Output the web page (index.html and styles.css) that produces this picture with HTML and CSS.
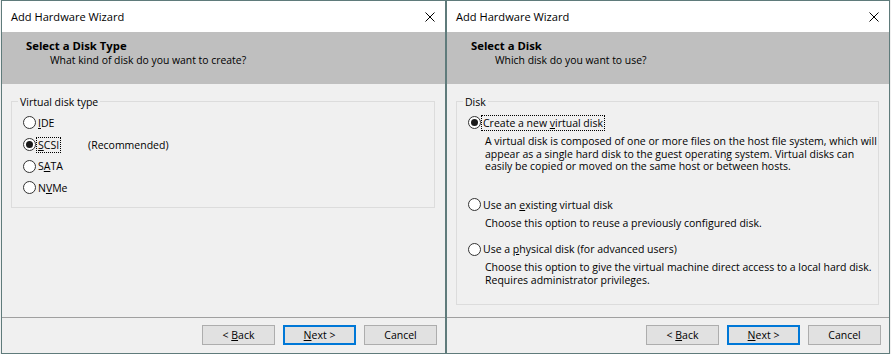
FILE: index.html
```html
<!DOCTYPE html>
<html lang="en">
<head>
  <meta charset="UTF-8">
  <title>Add Hardware Wizard</title>
  <link rel="stylesheet" href="styles.css">
</head>
<body>

  <div class="wizard">
    <div class="title-bar">
      <span class="title">Add Hardware Wizard</span>
      <svg class="close" width="10" height="10" viewBox="0 0 10 10"><path d="M0.5 0.5 L9.5 9.5 M9.5 0.5 L0.5 9.5"/></svg>
    </div>
    <div class="banner">
      <h2>Select a Disk Type</h2>
      <p>What kind of disk do you want to create?</p>
    </div>
    <div class="content">
      <fieldset class="group group-type">
        <legend>Virtual disk type</legend>
        <div class="option"><span class="radio"></span><span class="label"><u>I</u>DE</span></div>
        <div class="option"><span class="radio checked"></span><span class="label focused"><u>S</u>CSI</span><span class="hint">(Recommended)</span></div>
        <div class="option"><span class="radio"></span><span class="label">S<u>A</u>TA</span></div>
        <div class="option"><span class="radio"></span><span class="label">N<u>V</u>Me</span></div>
      </fieldset>
    </div>
    <div class="footer">
      <button class="btn">&lt; <u>B</u>ack</button>
      <button class="btn btn-default"><u>N</u>ext &gt;</button>
      <button class="btn">Cancel</button>
    </div>
  </div>

  <div class="wizard wizard-disk">
    <div class="title-bar">
      <span class="title">Add Hardware Wizard</span>
      <svg class="close" width="10" height="10" viewBox="0 0 10 10"><path d="M0.5 0.5 L9.5 9.5 M9.5 0.5 L0.5 9.5"/></svg>
    </div>
    <div class="banner">
      <h2>Select a Disk</h2>
      <p>Which disk do you want to use?</p>
    </div>
    <div class="content">
      <fieldset class="group group-disk">
        <legend>Disk</legend>
        <div class="option"><span class="radio checked"></span><span class="label focused">Create a new <u>v</u>irtual disk</span></div>
        <p class="desc">A virtual disk is composed of one or more files on the host file system, which will<br>appear as a single hard disk to the guest operating system. Virtual disks can<br>easily be copied or moved on the same host or between hosts.</p>
        <div class="option option-existing"><span class="radio"></span><span class="label">Use an <u>e</u>xisting virtual disk</span></div>
        <p class="desc">Choose this option to reuse a previously configured disk.</p>
        <div class="option option-physical"><span class="radio"></span><span class="label">Use a <u>p</u>hysical disk (for advanced users)</span></div>
        <p class="desc">Choose this option to give the virtual machine direct access to a local hard disk.<br>Requires administrator privileges.</p>
      </fieldset>
    </div>
    <div class="footer">
      <button class="btn">&lt; <u>B</u>ack</button>
      <button class="btn btn-default"><u>N</u>ext &gt;</button>
      <button class="btn">Cancel</button>
    </div>
  </div>

</body>
</html>
```

FILE: styles.css
```css
* {
  box-sizing: border-box;
}

html, body {
  margin: 0;
  padding: 0;
  overflow: hidden;
  background: #f0f0f0;
}

body {
  display: flex;
  padding-left: 1px;
  font-family: "Open Sans", sans-serif;
  font-size: 10.5px;
  color: #000;
}

.wizard {
  display: flex;
  flex-direction: column;
  width: 445px;
  height: 354px;
  border: 1px solid #5f7b7b;
  background: #f0f0f0;
}

.wizard-disk {
  width: 444px;
}

.title-bar {
  display: flex;
  align-items: center;
  justify-content: space-between;
  height: 31px;
  padding: 0 10px 0 9px;
  background: #fff;
}

.title {
  font-size: 11.1px;
  line-height: 31px;
}

.close path {
  fill: none;
  stroke: #000;
  stroke-width: 1;
}

.banner {
  height: 52px;
  padding: 6px 0 0 24px;
  background: #bfbfbf;
}

.banner h2 {
  margin: 0;
  font-size: 11.3px;
  font-weight: 700;
  line-height: 15px;
}

.banner p {
  margin: 0 0 0 24px;
  font-size: 10.4px;
  line-height: 14px;
}

.content {
  flex: 1;
  padding: 8px 10px 0 9px;
}

.group {
  margin: 0;
  padding: 2px 0 8px 0;
  border: 1px solid #dcdcdc;
}

.group legend {
  margin-left: 6px;
  padding: 2px 2px 0;
  line-height: 16px;
}

.group-disk {
  padding-bottom: 17px;
}

.option {
  display: flex;
  align-items: center;
  height: 21.7px;
  padding-left: 11px;
}

.radio {
  display: flex;
  align-items: center;
  justify-content: center;
  flex-shrink: 0;
  width: 13px;
  height: 13px;
  border: 1px solid #333;
  border-radius: 50%;
  background: #fff;
}

.radio.checked::after {
  content: "";
  width: 7px;
  height: 7px;
  border-radius: 50%;
  background: #1a1a1a;
}

.label {
  padding: 0 1px;
  line-height: 14px;
  border: 1px dotted transparent;
}

.label.focused {
  border-color: #000;
}

.hint {
  margin-left: 27px;
}

.desc {
  margin: 1.5px 0 0 28px;
  line-height: 12.6px;
  white-space: nowrap;
}

.option-existing {
  margin-top: 21px;
}

.option-physical {
  margin-top: 8.5px;
}

.footer {
  display: flex;
  justify-content: flex-end;
  gap: 8px;
  height: 36px;
  padding: 7px 8px 0 0;
  border-top: 1px solid #a0a0a0;
}

.btn {
  width: 73px;
  height: 20px;
  padding: 0;
  font-family: "Open Sans", sans-serif;
  font-size: 10.5px;
  color: #000;
  background: #e1e1e1;
  border: 1px solid #adadad;
}

.btn-default {
  border: 2px solid #0078d7;
}
```
